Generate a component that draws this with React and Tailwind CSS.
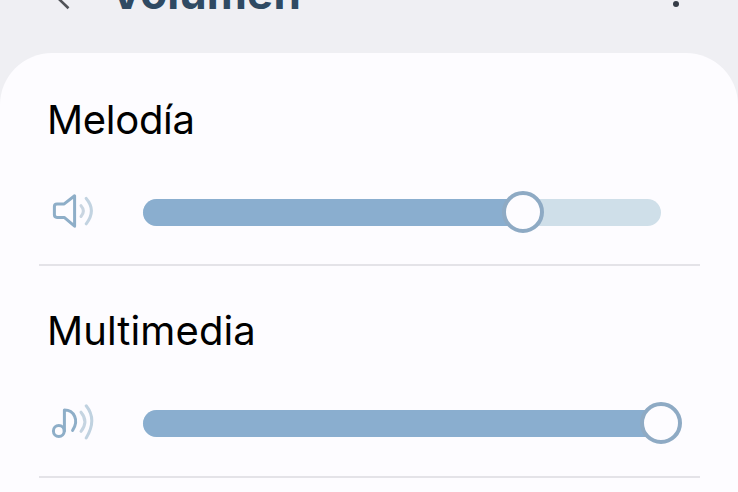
const SpeakerIcon = () => (
  <svg width="46" height="40" viewBox="0 0 46 40" fill="none" strokeLinecap="round" strokeLinejoin="round" strokeWidth="3">
    <path stroke="#8eaec8" d="M25.6 4.8v30.4L15.2 26.4H8q-2.6 0-2.6-2.6v-8.3q0-2.6 2.6-2.6h7.2Z" />
    <path stroke="#c9d5e1" d="M32 14.7q4.8 5.3 0 10.8" />
    <path stroke="#c2d3e1" d="M37.2 7.4q10.4 12 0 25.4" />
  </svg>
);

const MusicIcon = () => (
  <svg width="46" height="40" viewBox="0 0 46 40" fill="none" strokeLinecap="round" strokeLinejoin="round" strokeWidth="3">
    <circle cx="9.8" cy="29" r="5.4" stroke="#8eaec8" />
    <path stroke="#8eaec8" d="M15.4 29V8C25 8 30.4 18.2 23.6 28.4" />
    <path stroke="#c5d4e1" d="M32 10.2q7.8 9.2 0 19.2" />
    <path stroke="#c0d2e0" d="M37.2 3.8q11.2 14 0 32.2" />
  </svg>
);

function VolumeRow({ label, value, icon, tracking }) {
  return (
    <section className="mr-[38px] ml-[39px] h-[211px] border-b-2 border-[#e4e3e8] last:h-[212px]">
      <h2 className={`ml-2 h-[91px] pt-[41px] text-[40px] leading-[48px] text-black ${tracking}`}>{label}</h2>
      <div className="mt-[45px] ml-[10px] flex h-[43px] items-center">
        <div className="-mt-[3px] w-[94px] shrink-0">{icon}</div>
        <div className="relative h-[27px] w-[518px] shrink-0 rounded-full bg-[#cfdfe9]">
          <div className="h-full rounded-l-full bg-[#8aaecf]" style={{ width: `${value}%` }} />
          <div
            className="absolute top-[13px] size-[42px] -translate-x-1/2 -translate-y-1/2 rounded-full border-4 border-[#8eaac4] bg-[#fdfcff]"
            style={{ left: `${value}%` }}
          />
        </div>
      </div>
    </section>
  );
}

export default function App() {
  return (
    <div className="h-[492px] w-[738px] overflow-hidden bg-[#efeff3] font-['Inter','Liberation_Sans',sans-serif]">
      <header className="flex h-[53px] items-start">
        <svg className="ml-[48px] -mt-[18px] shrink-0" width="28" height="30" viewBox="0 0 28 30" fill="none" stroke="#505257" strokeWidth="2.6">
          <path d="M20.5 2 8 14.2l12.5 12" />
        </svg>
        <h1 className="-mt-[34px] ml-[34px] text-[44px] leading-[54px] font-bold tracking-[0.1px] text-[#2f4a63]">Volumen</h1>
        <div className="mt-[1px] mr-[59px] ml-auto size-[6px] rounded-full bg-[#353c46]" />
      </header>
      <main className="h-[500px] rounded-t-[52px] bg-[#fdfcff] pt-[2px]">
        <VolumeRow label="Melodía" value={73.4} icon={<SpeakerIcon />} tracking="tracking-[-0.3px]" />
        <VolumeRow label="Multimedia" value={100} icon={<MusicIcon />} tracking="tracking-[0.1px]" />
      </main>
    </div>
  );
}
